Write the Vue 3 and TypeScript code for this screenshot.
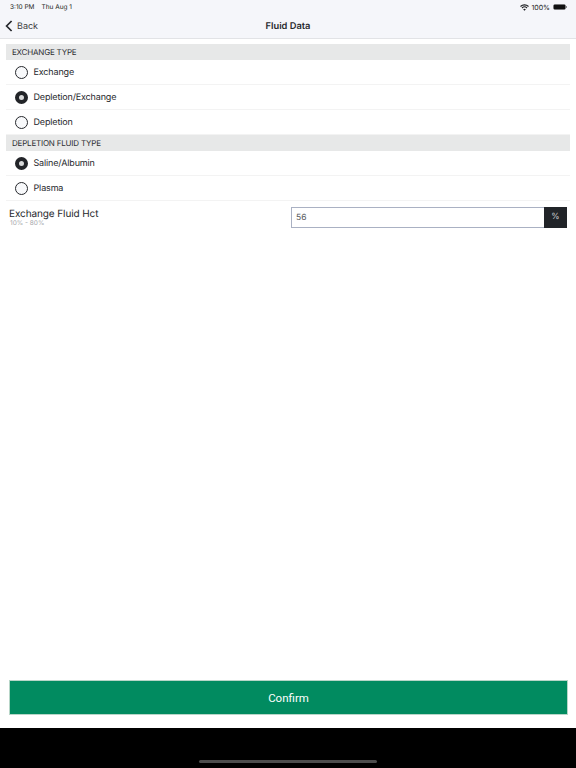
<script setup lang="ts">
const exchangeTypes = [
  { label: 'Exchange', on: false },
  { label: 'Depletion/Exchange', on: true },
  { label: 'Depletion', on: false }
]
const fluidTypes = [
  { label: 'Saline/Albumin', on: true },
  { label: 'Plasma', on: false }
]
</script>

<template>
  <div class="page">
    <header class="top">
      <div class="status">
        <span class="time">3:10 PM</span>
        <span class="date">Thu Aug 1</span>
        <span class="spacer"></span>
        <svg class="wifi" width="9" height="7" viewBox="0 0 18 14" fill="none" stroke="#1b1d21" stroke-width="2.2">
          <path d="M1 5 A11.5 11.5 0 0 1 17 5" />
          <path d="M4 8 A7.2 7.2 0 0 1 14 8" />
          <path d="M9 13.6 L6.4 10.8 A3.6 3.6 0 0 1 11.6 10.8 Z" fill="#1b1d21" stroke="none" />
        </svg>
        <span class="pct">100%</span>
        <span class="battery"><i></i></span>
        <span class="nub"></span>
      </div>
      <div class="nav">
        <span class="back">
          <svg width="8" height="12" viewBox="0 0 8 12">
            <path d="M6.6 1 L1.6 6 L6.6 11" fill="none" stroke="#26282c" stroke-width="1.7" />
          </svg>
          Back
        </span>
        <span class="title">Fluid Data</span>
      </div>
    </header>

    <main class="body">
      <div class="section">EXCHANGE TYPE</div>
      <div v-for="item in exchangeTypes" :key="item.label" class="row">
        <span class="radio" :class="{ on: item.on }"></span>
        {{ item.label }}
      </div>

      <div class="section">DEPLETION FLUID TYPE</div>
      <div v-for="item in fluidTypes" :key="item.label" class="row">
        <span class="radio" :class="{ on: item.on }"></span>
        {{ item.label }}
      </div>

      <div class="field">
        <div class="field-label">
          <div class="name">Exchange Fluid Hct</div>
          <div class="hint">10% - 80%</div>
        </div>
        <div class="input-group">
          <div class="input">56</div>
          <div class="unit">%</div>
        </div>
      </div>
    </main>

    <div class="footer">
      <button class="confirm">Confirm</button>
    </div>
    <div class="home-area"><span class="home"></span></div>
  </div>
</template>

<style>
html,
body {
  margin: 0;
  background: #fff;
}
</style>

<style scoped>
.page {
  width: 576px;
  height: 768px;
  display: flex;
  flex-direction: column;
  font-family: Inter, "Liberation Sans", sans-serif;
  text-rendering: geometricPrecision;
  color: #26282c;
  overflow: hidden;
}

.top {
  height: 38px;
  background: #f5f6fa;
  border-bottom: 1px solid #e2e3e6;
  flex: none;
}

.status {
  height: 14px;
  display: flex;
  align-items: center;
  padding: 0 9px 0 10px;
  font-size: 6.5px;
  color: #1b1d21;
}

.date {
  margin-left: 7px;
}

.spacer {
  flex: 1;
}

.pct {
  margin-left: 2px;
  font-size: 7px;
}

.battery {
  width: 13px;
  height: 6px;
  margin-left: 3px;
  box-sizing: border-box;
  border: 1px solid #77787a;
  border-radius: 2px;
  display: flex;
}

.battery i {
  flex: 1;
  background: #111;
}

.nub {
  width: 1px;
  height: 2px;
  background: #8b8c8e;
}

.nav {
  position: relative;
  height: 25px;
  display: flex;
  align-items: center;
  justify-content: center;
}

.back {
  position: absolute;
  left: 5px;
  top: 6px;
  display: flex;
  align-items: center;
  gap: 4px;
  font-size: 9px;
  color: #3a3c40;
}

.title {
  font-size: 9.3px;
  font-weight: 600;
}

.body {
  flex: 1;
  padding: 5px 6px 0;
}

.section {
  height: 16px;
  line-height: 17px;
  padding-left: 6px;
  background: #e7e8e8;
  font-size: 8px;
  letter-spacing: -0.2px;
  color: #2c2e32;
}

.row {
  height: 25px;
  box-sizing: border-box;
  display: flex;
  align-items: center;
  gap: 5.5px;
  padding-left: 9px;
  font-size: 9px;
  letter-spacing: -0.15px;
  border-bottom: 1px solid #f3f3f3;
}

.radio {
  width: 13px;
  height: 13px;
  box-sizing: border-box;
  border: 1.3px solid #26282c;
  border-radius: 50%;
  background: #f8f9fb;
}

.radio.on {
  border: 4px solid #222428;
  background: #d9dadb;
}

.field {
  display: flex;
  justify-content: space-between;
  align-items: center;
  padding: 6px 3px 0;
}

.name {
  font-size: 10px;
  letter-spacing: -0.1px;
  line-height: 12px;
}

.hint {
  font-size: 6.5px;
  line-height: 7px;
  margin-left: 1px;
  color: #a4a6aa;
}

.input-group {
  display: flex;
  width: 276px;
  height: 21px;
}

.input {
  flex: 1;
  box-sizing: border-box;
  border: 1px solid #aab1c3;
  border-right: 0;
  padding-left: 4px;
  font-size: 8.5px;
  line-height: 21px;
  color: #55575a;
}

.unit {
  width: 23px;
  background: #212428;
  color: #c9cacc;
  font-size: 8.5px;
  line-height: 21px;
  text-align: center;
}

.footer {
  flex: none;
  padding: 0 8px 13px 9px;
}

.confirm {
  display: block;
  width: 100%;
  height: 35px;
  border: 1px solid #b7d6c8;
  background: #018b60;
  color: #fff;
  font: 11.5px Roboto, "Liberation Sans", sans-serif;
  padding: 0;
}

.home-area {
  flex: none;
  height: 40px;
  background: #000;
  position: relative;
}

.home {
  position: absolute;
  left: 199px;
  top: 32px;
  width: 178px;
  height: 3px;
  border-radius: 2px;
  background: #4d4d4d;
}
</style>
